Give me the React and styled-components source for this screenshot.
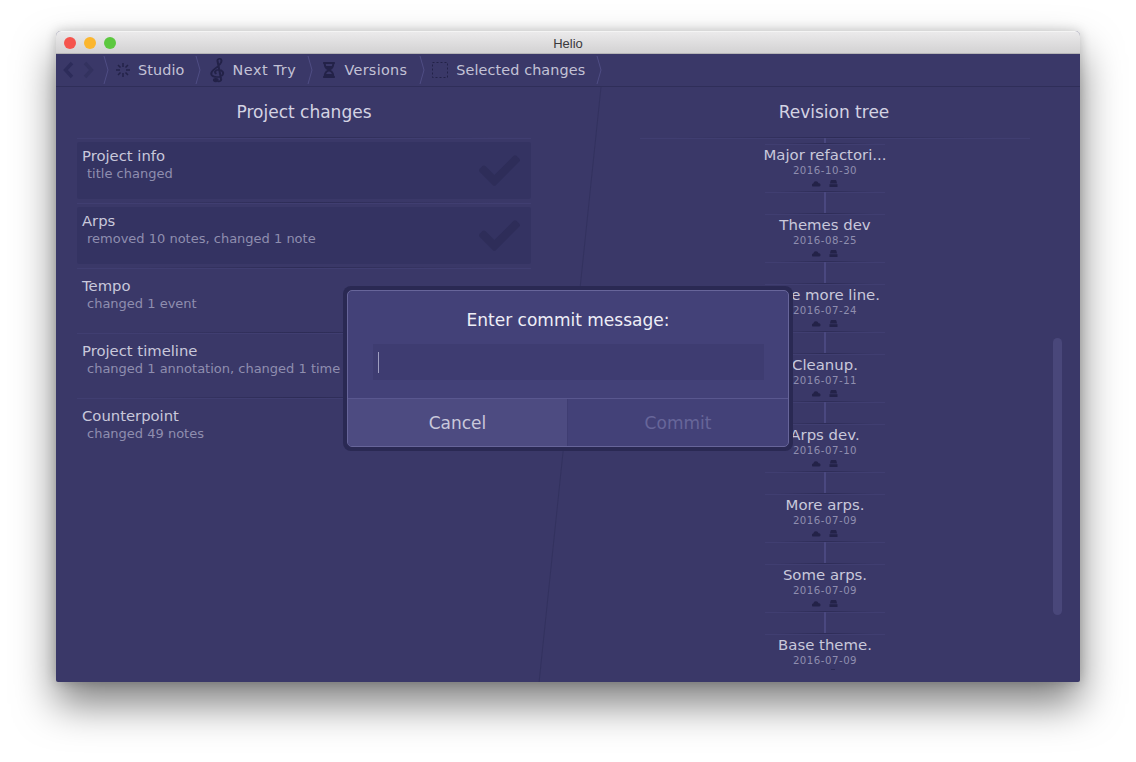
import React from 'react';
import styled, { createGlobalStyle } from 'styled-components';
import { FaCheck, FaHourglassHalf } from 'react-icons/fa';

const GlobalStyle = createGlobalStyle`
  html, body { margin: 0; padding: 0; background: #fff; }
  body { font-family: "DejaVu Sans", "Liberation Sans", sans-serif; }
`;

const Page = styled.div`
  width: 1136px;
  height: 762px;
  padding: 31px 56px 0;
  box-sizing: border-box;
  overflow: hidden;
`;

const Win = styled.div`
  position: relative;
  width: 1024px;
  height: 651px;
  display: flex;
  flex-direction: column;
  border-radius: 5px 5px 2px 2px;
  background: #3a3868;
  box-shadow: 0 22px 40px rgba(0, 0, 0, 0.5), 0 0 12px rgba(0, 0, 0, 0.2);
`;

const TitleBar = styled.div`
  position: relative;
  height: 23px;
  flex: none;
  display: flex;
  align-items: center;
  gap: 8px;
  padding-left: 8px;
  box-sizing: border-box;
  border-radius: 5px 5px 0 0;
  background: linear-gradient(#ebeaeb, #d3d2d3);
  border-top: 1px solid #f4f4f4;
  border-bottom: 1px solid #b5b4b6;
`;

const Light = styled.span`
  width: 12px;
  height: 12px;
  border-radius: 50%;
  background: ${p => p.$color};
`;

const WinTitle = styled.span`
  position: absolute;
  left: 0;
  right: 0;
  padding-top: 1px;
  text-align: center;
  font-family: "Liberation Sans", sans-serif;
  font-size: 13px;
  color: #3a3a3c;
`;

const Crumbs = styled.div`
  height: 33px;
  flex: none;
  display: flex;
  align-items: center;
  box-sizing: border-box;
  border-bottom: 1px solid #2f2e59;
  padding-left: 6px;
  color: #c3c2d6;
  font-size: 14.4px;
  letter-spacing: 0.1px;
`;

const Crumb = styled.span`
  display: flex;
  align-items: center;
  height: 100%;
  margin-left: ${p => p.$gap}px;
  letter-spacing: ${p => p.$track || 0.1}px;
  white-space: nowrap;
`;

const CrumbIcon = styled.span`
  display: flex;
  align-items: center;
  justify-content: center;
  width: ${p => p.$w}px;
  margin-right: ${p => p.$mr}px;
  color: #232248;
`;

const Body = styled.div`
  position: relative;
  flex: 1;
  display: flex;
  min-height: 0;
  overflow: hidden;
`;

const Divider = styled.svg`
  position: absolute;
  left: 470px;
  top: 0;
`;

const LeftCol = styled.div`
  width: 496px;
  flex: none;
`;

const RightCol = styled.div`
  flex: 1;
  position: relative;
`;

const PanelTitle = styled.div`
  height: 50px;
  display: flex;
  align-items: center;
  justify-content: center;
  padding-left: ${p => p.$indent || 0}px;
  font-size: 17px;
  color: #d4d3e3;
`;

const List = styled.div`
  padding: 0 21px;
`;

const Fade = styled.div`
  height: 1px;
  background: linear-gradient(90deg, rgba(42, 41, 82, 0) 8%, rgba(42, 41, 82, 0.8) 50%, rgba(42, 41, 82, 0) 92%);
  box-shadow: 0 1px 0 rgba(90, 88, 150, 0.2);
`;

const Row = styled.div`
  position: relative;
  height: 57px;
  margin: 4px 0 3px;
  padding: 5px 5px 0;
  box-sizing: border-box;
  border-radius: 2px;
  background: ${p => (p.$selected ? '#343362' : 'transparent')};
`;

const RowTitle = styled.div`
  font-size: 14.8px;
  line-height: 17px;
  color: #c9c8db;
`;

const RowSub = styled.div`
  margin: 2px 0 0 5px;
  font-size: 13px;
  line-height: 16px;
  color: #8f8eaf;
  white-space: nowrap;
`;

const Check = styled(FaCheck)`
  position: absolute;
  right: 11px;
  top: 8px;
  width: 41px;
  height: 41px;
  color: #2e2d59;
`;

const Tree = styled.div`
  padding-left: 18px;
  display: flex;
  flex-direction: column;
  align-items: center;
`;

const HeadRule = styled(Fade)`
  width: 390px;
  margin-left: 88px;
`;

const Commit = styled.div`
  width: 120px;
  height: 47px;
  display: flex;
  flex-direction: column;
  align-items: center;
  text-align: center;
  flex: none;
`;

const CommitName = styled.div`
  margin-top: 3px;
  font-size: 14.9px;
  line-height: 16px;
  color: #c9c8db;
  white-space: nowrap;
`;

const CommitDate = styled.div`
  margin-top: 1px;
  font-size: 10.2px;
  line-height: 13px;
  letter-spacing: 0.5px;
  color: #8f8eaf;
`;

const CommitIcons = styled.div`
  display: flex;
  gap: 8px;
  margin-top: 3px;
`;

const Tick = styled.div`
  width: 4px;
  height: 1px;
  margin: 2px 0 0 16px;
  background: #2a2953;
`;

const Link = styled.div`
  width: 2px;
  height: ${p => p.$h}px;
  background: #4a4880;
  flex: none;
`;

const TreeRule = styled(Fade)`
  width: 120px;
  flex: none;
`;

const Scroll = styled.div`
  position: absolute;
  right: 18px;
  top: 251px;
  width: 9px;
  height: 277px;
  border-radius: 5px;
  background: #49477a;
`;

const DialogFrame = styled.div`
  position: absolute;
  left: 287px;
  top: 199px;
  width: 450px;
  height: 165px;
  box-sizing: border-box;
  padding: 4px;
  border-radius: 8px;
  background: #2a2953;
`;

const Dialog = styled.div`
  height: 100%;
  box-sizing: border-box;
  display: flex;
  flex-direction: column;
  border: 1px solid #67659a;
  border-radius: 5px;
  background: #434178;
  overflow: hidden;
`;

const DialogTitle = styled.div`
  height: 53px;
  padding-top: 4px;
  box-sizing: border-box;
  flex: none;
  display: flex;
  align-items: center;
  justify-content: center;
  font-size: 17px;
  color: #eeeef6;
`;

const Input = styled.div`
  height: 36px;
  margin: 0 24px 0 25px;
  flex: none;
  padding-left: 5px;
  display: flex;
  align-items: center;
  background: #3e3c71;
`;

const Caret = styled.div`
  width: 1px;
  height: 21px;
  background: #9f9ec0;
`;

const Buttons = styled.div`
  flex: 1;
  margin-top: 18px;
  display: flex;
  border-top: 1px solid #59578f;
`;

const Btn = styled.div`
  flex: ${p => (p.$primary ? 1 : 'none')};
  width: ${p => (p.$primary ? 'auto' : '219px')};
  display: flex;
  align-items: center;
  justify-content: center;
  font-size: 17px;
  color: ${p => (p.$primary ? '#67669a' : '#c9c8db')};
  background: ${p => (p.$primary ? 'transparent' : '#4d4b81')};
  border-right: ${p => (p.$primary ? 'none' : '1px solid #3f3d72')};
`;

const Chevron = ({ gap }) => (
  <Crumb $gap={gap}>
    <svg width="6" height="30" viewBox="0 0 6 30" fill="none">
      <path d="M1 1L5 15L1 29" stroke="#4f4d84" strokeWidth="1" />
    </svg>
  </Crumb>
);

const Studio = () => (
  <svg width="16" height="16" viewBox="0 0 16 16" stroke="#232248" strokeWidth="1.5">
    <path d="M8 1v4M8 11v4M1 8h4M11 8h4M3 3l2.5 2.5M13 3l-2.5 2.5M3 13l2.5-2.5M13 13l-2.5-2.5" />
  </svg>
);

const Clef = () => (
  <svg width="15" height="25" viewBox="1 0 13 30" preserveAspectRatio="none" fill="none" stroke="#232248" strokeWidth="1.8">
    <path d="M7.5 28C10 28.5 11 27 10.5 24.5L7.5 3.5C7.3 1.5 9.5 0 10.5 1.5C12 4.5 9 9 5.5 12.5C2.5 15.5 1.5 18 2.5 20.5C4 23.5 9.5 23.5 11.5 21C13.5 18 11.5 14 8.5 14C5.5 14 4.5 17.5 6.5 19" />
    <circle cx="6" cy="26.5" r="1.6" fill="#232248" />
  </svg>
);

const Cloud = () => (
  <svg width="9" height="7" viewBox="0 0 9 7" fill="#232248">
    <path d="M1.5 6.5a1.5 1.5 0 0 1 -0.2 -3a2.7 2.7 0 0 1 5.2 -0.3a1.7 1.7 0 0 1 0.8 3.3z" />
  </svg>
);

const Drive = () => (
  <svg width="9" height="7" viewBox="0 0 9 7" fill="#232248">
    <path d="M2.5 0H6.5C7.2 0 7.6 1 8 3.5H1C1.4 1 1.8 0 2.5 0Z" />
    <path d="M0.5 4.2H8.5V7H0.5Z" />
  </svg>
);

const changes = [
  { title: 'Project info', sub: 'title changed', selected: true },
  { title: 'Arps', sub: 'removed 10 notes, changed 1 note', selected: true },
  { title: 'Tempo', sub: 'changed 1 event' },
  { title: 'Project timeline', sub: 'changed 1 annotation, changed 1 time signature' },
  { title: 'Counterpoint', sub: 'changed 49 notes' },
];

const commits = [
  ['Major refactori...', '2016-10-30'],
  ['Themes dev', '2016-08-25'],
  ['One more line.', '2016-07-24'],
  ['Cleanup.', '2016-07-11'],
  ['Arps dev.', '2016-07-10'],
  ['More arps.', '2016-07-09'],
  ['Some arps.', '2016-07-09'],
  ['Base theme.', '2016-07-09'],
];

export default function App() {
  return (
    <Page>
      <GlobalStyle />
      <Win>
        <TitleBar>
          <Light $color="#f5544d" />
          <Light $color="#fbb62e" />
          <Light $color="#5cc83f" />
          <WinTitle>Helio</WinTitle>
        </TitleBar>
        <Crumbs>
          <svg width="13" height="18" viewBox="0 0 13 18" fill="none" stroke="#2d2c5a" strokeWidth="3.4">
            <path d="M10 2L3.5 9L10 16" />
          </svg>
          <Crumb $gap={7}>
            <svg width="12" height="18" viewBox="0 0 12 18" fill="none" stroke="#33325f" strokeWidth="3.4">
              <path d="M3 2L9.5 9L3 16" />
            </svg>
          </Crumb>
          <Chevron gap={9} />
          <Crumb $gap={6}><CrumbIcon $w={16} $mr={7}><Studio /></CrumbIcon>Studio</Crumb>
          <Chevron gap={11} />
          <Crumb $gap={7} $track={0.6}><CrumbIcon $w={18} $mr={6}><Clef /></CrumbIcon>Next Try</Crumb>
          <Chevron gap={11} />
          <Crumb $gap={8} $track={0.3}><CrumbIcon $w={16} $mr={7}><FaHourglassHalf size={16} /></CrumbIcon>Versions</Crumb>
          <Chevron gap={12} />
          <Crumb $gap={7}>
            <CrumbIcon $w={16} $mr={8}>
              <svg width="16" height="16" viewBox="0 0 16 16" fill="none" stroke="#232248" strokeWidth="1" strokeDasharray="2 2">
                <rect x="0.5" y="0.5" width="15" height="15" />
              </svg>
            </CrumbIcon>
            Selected changes
          </Crumb>
          <Chevron gap={11} />
        </Crumbs>
        <Body>
          <Divider width="80" height="596" viewBox="0 0 80 596" fill="none">
            <path d="M75 0L13 596" stroke="#33325f" strokeWidth="1" />
          </Divider>
          <LeftCol>
            <PanelTitle>Project changes</PanelTitle>
            <List>
              <Fade />
              {changes.map((c, i) => (
                <React.Fragment key={c.title}>
                  <Row $selected={c.selected}>
                    <RowTitle>{c.title}</RowTitle>
                    <RowSub>{c.sub}</RowSub>
                    {c.selected && <Check />}
                  </Row>
                  {i < changes.length - 1 && <Fade />}
                </React.Fragment>
              ))}
            </List>
          </LeftCol>
          <RightCol>
            <PanelTitle $indent={36}>Revision tree</PanelTitle>
            <HeadRule />
            <Tree>
              <Link $h={5} />
              {commits.map(([name, date], i) => (
                <React.Fragment key={name}>
                  <TreeRule />
                  <Commit>
                    <CommitName>{name}</CommitName>
                    <CommitDate>{date}</CommitDate>
                    {i < commits.length - 1
                      ? <CommitIcons><Cloud /><Drive /></CommitIcons>
                      : <Tick />}
                  </Commit>
                  {i < commits.length - 1 && <TreeRule />}
                  {i < commits.length - 1 && <Link $h={21} />}
                </React.Fragment>
              ))}
            </Tree>
            <Scroll />
          </RightCol>
          <DialogFrame>
            <Dialog>
              <DialogTitle>Enter commit message:</DialogTitle>
              <Input><Caret /></Input>
              <Buttons>
                <Btn>Cancel</Btn>
                <Btn $primary>Commit</Btn>
              </Buttons>
            </Dialog>
          </DialogFrame>
        </Body>
      </Win>
    </Page>
  );
}
